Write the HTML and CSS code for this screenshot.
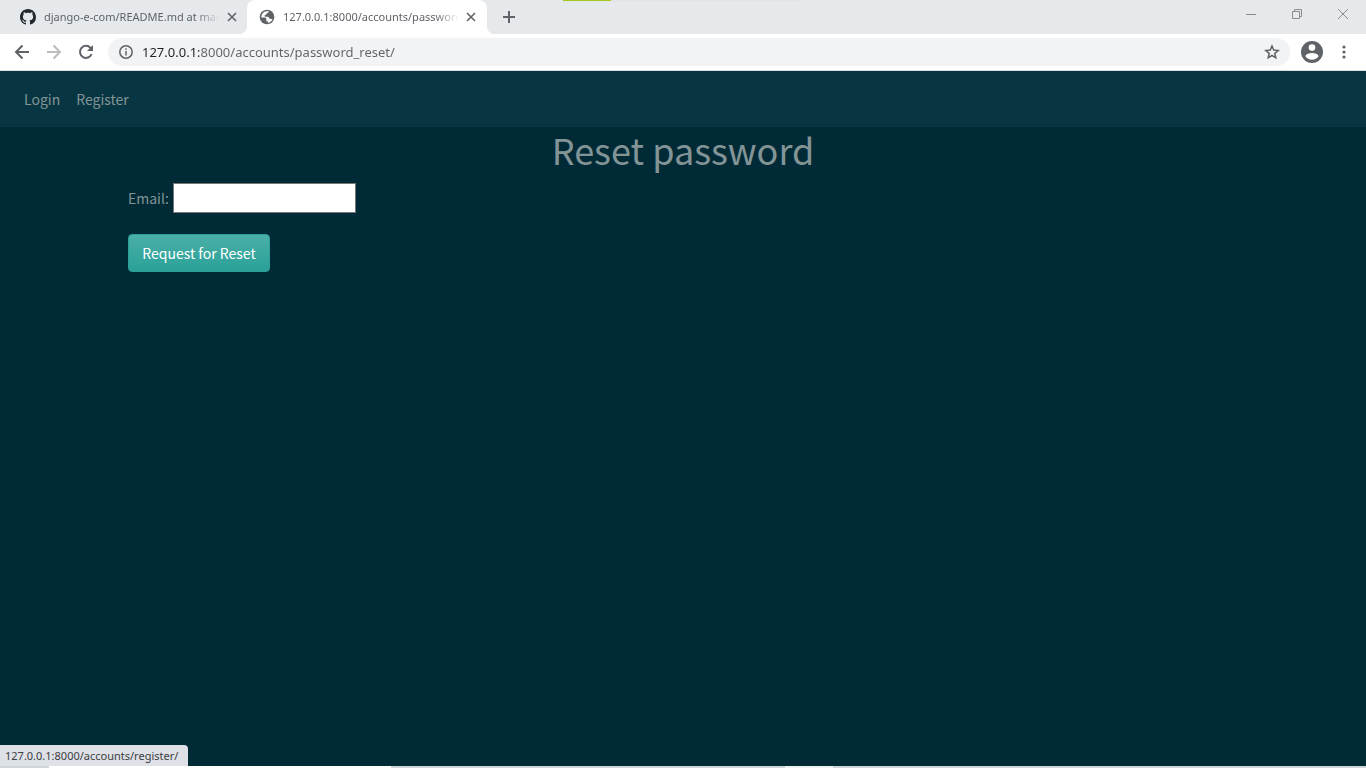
FILE: index.html
```html
<!DOCTYPE html>
<html lang="en">
<head>
<meta charset="utf-8">
<title>Reset password</title>
<link rel="stylesheet" href="styles.css">
</head>
<body>
<div class="browser">
  <header class="tab-strip">
    <div class="tab">
      <svg class="favicon" viewBox="0 0 16 16" aria-hidden="true"><path fill="#24292e" d="M8 0C3.58 0 0 3.58 0 8c0 3.54 2.29 6.53 5.47 7.59.4.07.55-.17.55-.38 0-.19-.01-.82-.01-1.49-2.01.37-2.53-.49-2.69-.94-.09-.23-.48-.94-.82-1.13-.28-.15-.68-.52-.01-.53.63-.01 1.08.58 1.23.82.72 1.21 1.87.87 2.33.66.07-.52.28-.87.51-1.07-1.78-.2-3.64-.89-3.64-3.95 0-.87.31-1.59.82-2.15-.08-.2-.36-1.02.08-2.12 0 0 .67-.21 2.2.82.64-.18 1.32-.27 2-.27s1.36.09 2 .27c1.53-1.04 2.2-.82 2.2-.82.44 1.1.16 1.92.08 2.12.51.56.82 1.27.82 2.15 0 3.07-1.87 3.75-3.65 3.95.29.25.54.73.54 1.48 0 1.07-.01 1.93-.01 2.2 0 .21.15.46.55.38A8.01 8.01 0 0 0 16 8c0-4.42-3.58-8-8-8z"/></svg>
      <a class="tab-title" href="#">django-e-com/README.md at master</a>
      <button class="icon-button tab-close" aria-label="Close tab"><svg width="10" height="10" viewBox="0 0 10 10"><path d="M1 1l8 8M9 1L1 9"/></svg></button>
    </div>
    <div class="tab tab-active">
      <svg class="favicon" viewBox="0 0 16 16" aria-hidden="true"><circle cx="8" cy="8" r="7.3" fill="#5f6368"/><path fill="#fff" d="M7.6 2.2h2.2c0 1.3-.9 1.8-2 2l-.4 1.4-1.6.5v1.6h2.6c1.3 0 1.9.8 1.9 2h1.8l1.4.8c-.8 1.8-2.6 3.2-4.6 3.4v-1.7H7.300v-2c0-1-.7-1.600-1.600-1.600H2.300C2.200 5.200 4.500 2.400 7.600 2.200z"/></svg>
      <a class="tab-title" href="#">127.0.0.1:8000/accounts/password_reset/</a>
      <button class="icon-button tab-close" aria-label="Close tab"><svg width="10" height="10" viewBox="0 0 10 10"><path d="M1 1l8 8M9 1L1 9"/></svg></button>
    </div>
    <button class="icon-button new-tab" aria-label="New tab"><svg width="12" height="12" viewBox="0 0 12 12"><path d="M6 0v12M0 6h12"/></svg></button>
    <div class="drag-handle"></div>
    <div class="window-controls">
      <button class="window-button" aria-label="Minimize"><svg width="12" height="12" viewBox="0 0 12 12"><path d="M1 6.500h10"/></svg></button>
      <button class="window-button" aria-label="Restore"><svg width="12" height="12" viewBox="0 0 12 12"><path d="M1.500 3.500h7v7h-7zM3.500 3.500v-2h7v7h-2"/></svg></button>
      <button class="window-button" aria-label="Close"><svg width="12" height="12" viewBox="0 0 12 12"><path d="M1 1l10 10M11 1L1 11"/></svg></button>
    </div>
  </header>

  <div class="toolbar">
    <button class="icon-button nav-button" aria-label="Back"><svg width="16" height="16" viewBox="0 0 16 16"><path d="M15 8H2M8.500 1.500L2 8l6.500 6.500"/></svg></button>
    <button class="icon-button nav-button nav-disabled" aria-label="Forward" disabled><svg width="16" height="16" viewBox="0 0 16 16"><path d="M1 8h13M7.500 1.500L14 8l-6.500 6.500"/></svg></button>
    <button class="icon-button nav-button" aria-label="Reload"><svg width="16" height="16" viewBox="0 0 16 16"><path d="M13.600 10A6 6 0 1 1 12.400 3.800L14 5.500"/><path class="solid" d="M15 1v6H9z"/></svg></button>
    <div class="address-bar">
      <svg class="info" width="14" height="14" viewBox="0 0 14 14" aria-hidden="true"><circle cx="7" cy="7" r="6.200"/><path d="M7 6v4.500M7 3.300v1.500"/></svg>
      <input class="address" type="text" aria-label="Address" value="127.0.0.1:8000/accounts/password_reset/">
      <button class="icon-button star" aria-label="Bookmark this page"><svg width="16" height="16" viewBox="0 0 16 16"><path d="M8 2l1.700 4.100 4.500.4-3.400 2.900 1 4.400L8 11.500l-3.800 2.300 1-4.400-3.400-2.900 4.500-.4z"/></svg></button>
    </div>
    <button class="icon-button profile" aria-label="Profile"><svg width="22" height="22" viewBox="0 0 22 22"><circle class="disc" cx="11" cy="11" r="11"/><circle class="person" cx="11" cy="6.600" r="3.300"/><path class="person" d="M4.400 15.300c0-2.200 4.400-3.400 6.600-3.400s6.600 1.200 6.600 3.400c-1.400 2.100-3.800 3.400-6.600 3.400s-5.200-1.300-6.600-3.400z"/></svg></button>
    <button class="icon-button menu" aria-label="Menu"><svg width="4" height="14" viewBox="0 0 4 14"><circle cx="2" cy="2" r="1.600"/><circle cx="2" cy="7" r="1.600"/><circle cx="2" cy="12" r="1.600"/></svg></button>
  </div>

  <div class="page">
    <nav class="navbar">
      <a class="nav-link" href="#">Login</a>
      <a class="nav-link" href="#">Register</a>
    </nav>
    <main class="content">
      <h1 class="title">Reset password</h1>
      <form class="reset-form">
        <div class="field">
          <label for="email">Email:</label>
          <input class="email" id="email" type="email">
        </div>
        <button class="submit" type="button">Request for Reset</button>
      </form>
    </main>
    <div class="status">127.0.0.1:8000/accounts/register/</div>
  </div>
  <footer class="taskbar"><span class="task-search"></span><span class="task-active"></span></footer>
</div>
</body>
</html>
```
FILE: styles.css
```css
* { box-sizing: border-box; }

body {
  margin: 0;
  font-family: "Noto Sans", "Open Sans", sans-serif;
}

button { font-family: inherit; cursor: pointer; }
a { text-decoration: none; }
svg { display: block; flex: none; }

.browser {
  display: flex;
  flex-direction: column;
  min-height: 100vh;
}

/* Tabs */
.tab-strip {
  display: flex;
  height: 34px;
  padding-left: 8px;
  background: #e5e9ec;
}

.tab {
  display: flex;
  align-items: center;
  width: 239px;
  padding: 0 7px 0 12px;
}

.tab-active {
  position: relative;
  width: 240px;
  padding-right: 8px;
  background: #fff;
  border-radius: 8px 8px 0 0;
}

.tab-active::before,
.tab-active::after {
  content: "";
  position: absolute;
  bottom: 0;
  width: 8px;
  height: 8px;
}

.tab-active::before {
  right: 100%;
  background: radial-gradient(circle at 0 0, transparent 8px, #fff 8px);
}

.tab-active::after {
  left: 100%;
  background: radial-gradient(circle at 100% 0, transparent 8px, #fff 8px);
}

.favicon { width: 16px; height: 16px; }

.tab-title {
  flex: 1;
  min-width: 0;
  margin-left: 8px;
  overflow: hidden;
  color: #5f6368;
  font-size: 11px;
  line-height: 16px;
  white-space: nowrap;
  -webkit-mask-image: linear-gradient(to left, transparent, #000 24px);
  mask-image: linear-gradient(to left, transparent, #000 24px);
}

.icon-button {
  display: flex;
  align-items: center;
  justify-content: center;
  padding: 0;
  border: 0;
  background: none;
  fill: none;
  stroke: #5f6368;
  stroke-width: 2;
}

.tab-close {
  width: 16px;
  height: 16px;
  margin-left: 4px;
  stroke-width: 1.600;
}

.new-tab {
  width: 28px;
  margin-left: 8px;
}

.drag-handle {
  width: 236px;
  height: 1px;
  margin-left: 40px;
  background: linear-gradient(to right, #a4c91c 48px, #e3e3e3 48px);
}

.window-controls {
  display: flex;
  margin-left: auto;
}

.window-button {
  display: flex;
  align-items: center;
  justify-content: center;
  width: 46px;
  height: 28px;
  padding: 0;
  border: 0;
  background: none;
  fill: none;
  stroke: #8a8d8f;
}

/* Toolbar */
.toolbar {
  display: flex;
  align-items: center;
  height: 37px;
  padding: 0 8px 0 6px;
  border-bottom: 1px solid #dadce0;
  background: #fff;
}

.nav-button { width: 32px; height: 28px; }
.nav-disabled { stroke: #babcbe; }
.nav-button .solid { fill: #5f6368; stroke: none; }

.address-bar {
  display: flex;
  flex: 1;
  align-items: center;
  height: 28px;
  margin-left: 6px;
  padding: 0 10px 0 11px;
  border-radius: 14px;
  background: #f1f3f4;
}

.info { fill: none; stroke: #5f6368; stroke-width: 1.500; }

.address {
  flex: 1;
  min-width: 0;
  height: 20px;
  margin-left: 9px;
  padding: 0;
  border: 0;
  outline: 0;
  background: linear-gradient(to right, #202124 57px, #5f6368 57px);
  -webkit-background-clip: text;
  background-clip: text;
  color: transparent;
  font-family: inherit;
  font-size: 13px;
  line-height: 20px;
}

.star { width: 16px; height: 16px; stroke-width: 1.500; }
.profile { margin-left: 11px; stroke: none; }
.profile .disc { fill: #5f6368; }
.profile .person { fill: #fff; }
.menu { width: 28px; height: 28px; margin-left: 7px; fill: #5f6368; stroke: none; }

/* Page */
.page {
  position: relative;
  flex: 1;
  background: #002b36;
  color: #839496;
  font-family: "Noto Sans CJK SC", "Open Sans", sans-serif;
  font-size: 14px;
  line-height: 24px;
}

.navbar {
  display: flex;
  gap: 16px;
  padding: 16px 24px;
  background: #073642;
}

.nav-link { color: #839496; }

.content {
  max-width: 1140px;
  margin: 0 auto;
  padding: 0 15px;
}

.title {
  margin: 0 0 12px;
  font-size: 36px;
  font-weight: 400;
  line-height: 44px;
  text-align: center;
}

.field {
  display: flex;
  align-items: center;
  gap: 4px;
  margin-bottom: 21px;
}

.email {
  width: 183px;
  height: 30px;
  padding: 1px 2px;
  border: 1px solid #767676;
  background: #fff;
  font: inherit;
}

.submit {
  min-width: 142px;
  height: 38px;
  padding: 0 12px;
  border: 1px solid #2aa198;
  border-radius: 4px;
  background: linear-gradient(to bottom, #4aafa7, #2aa198);
  color: #fff;
  font-size: 14px;
  font-family: inherit;
  line-height: 24px;
}

.status {
  position: absolute;
  bottom: 0;
  left: 0;
  min-width: 188px;
  padding: 3px 6px 2px 5px;
  border-radius: 0 4px 0 0;
  background: #dee1e6;
  color: #3c4043;
  font-family: "Noto Sans", "Open Sans", sans-serif;
  font-size: 11px;
  line-height: 16px;
}

/* Top edge of the desktop taskbar */
.taskbar {
  display: flex;
  height: 2px;
  padding-left: 49px;
  background: #cfd6d7;
}

.task-search { width: 342px; background: #fff; }
.task-active { width: 48px; margin-left: 394px; background: #eef2f2; }
```
